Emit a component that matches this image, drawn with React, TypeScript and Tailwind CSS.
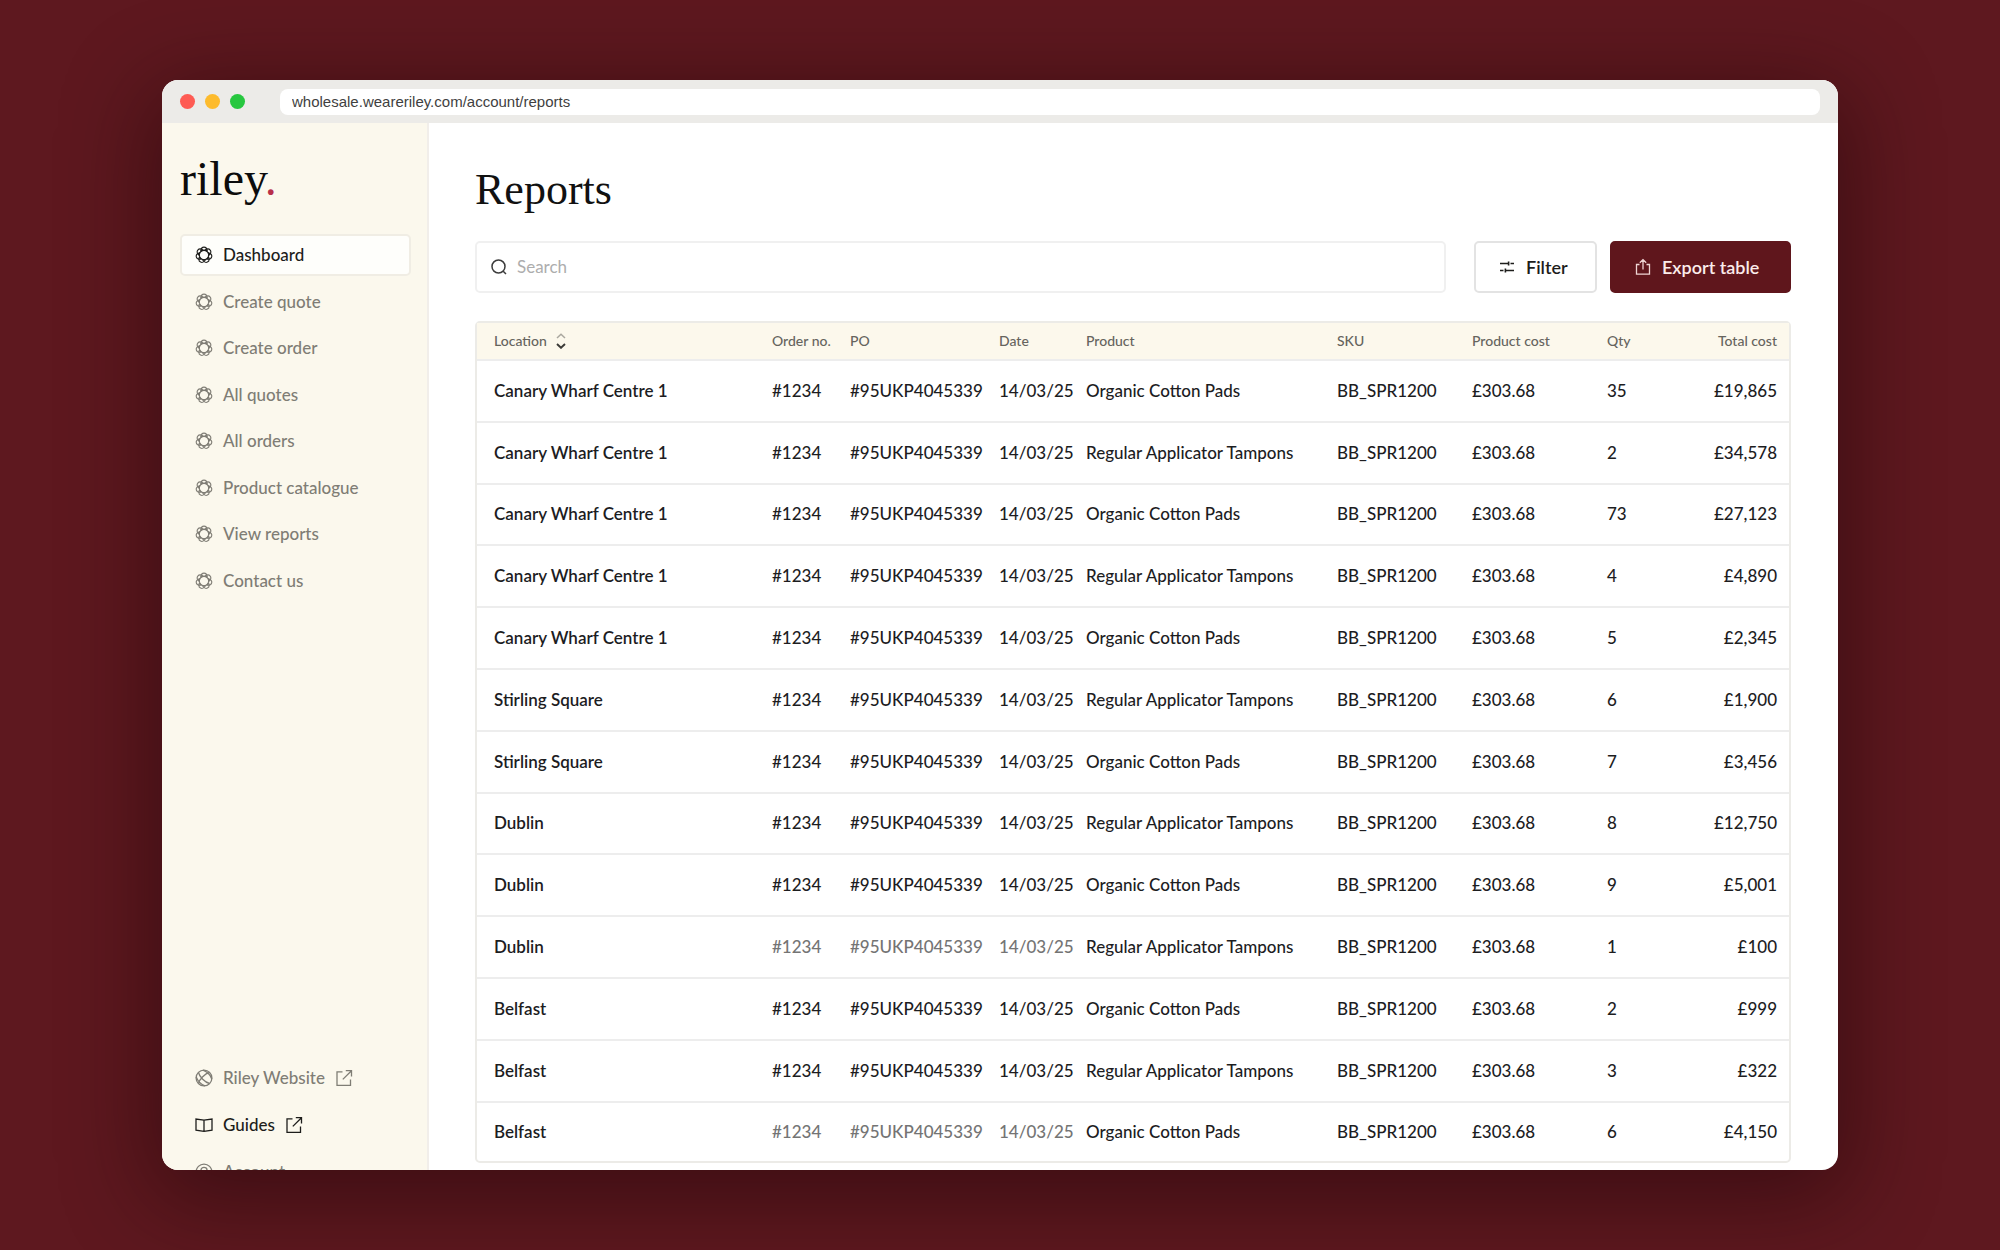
import React from "react";

type IconProps = { className?: string };

const stroke = {
  viewBox: "0 0 18 18",
  fill: "none",
  stroke: "currentColor",
  strokeWidth: 1.3,
  "aria-hidden": true,
} as const;

const petalAngles = [0, 1, 2, 3, 4, 5, 6].map((n) => (n * 360) / 7);

function FlowerIcon({ className = "" }: IconProps) {
  return (
    <svg {...stroke} className={"size-[18px] shrink-0 " + className}>
      {petalAngles.map((angle) => (
        <path
          key={angle}
          transform={`rotate(${angle} 9 9)`}
          d="M5.700 5.100C6 2.400 7.400 1.100 9 1.100s3 1.300 3.300 4C10.300 4.200 7.700 4.200 5.700 5.100Z"
          strokeWidth="1.1"
        />
      ))}
    </svg>
  );
}

function GlobeIcon({ className = "" }: IconProps) {
  return (
    <svg {...stroke} className={"size-[18px] shrink-0 " + className}>
      <circle cx="9" cy="9" r="7.900" />
      <path d="M3.500 3.500C4.500 8 10 13.500 14.500 14.500M14.500 3.500C10 4.500 4.500 10 3.500 14.500M8 1.200C12.500 3 15.500 6 16.800 10M1.200 8C3 12.500 6 15.500 10 16.800" />
    </svg>
  );
}

function BookIcon({ className = "" }: IconProps) {
  return (
    <svg {...stroke} className={"size-[18px] shrink-0 " + className}>
      <path d="M9 4.200 1 3v11.200l8 1.200 8-1.200V3L9 4.200ZM9 4.200v11.200" />
    </svg>
  );
}

function AccountIcon({ className = "" }: IconProps) {
  return (
    <svg {...stroke} className={"size-[18px] shrink-0 " + className}>
      <circle cx="9" cy="9" r="7.900" />
      <circle cx="9" cy="7.500" r="3.100" />
      <path d="M3.800 15c1-2.500 2.800-3.500 5.200-3.500s4.200 1 5.200 3.500" />
    </svg>
  );
}

function ExternalIcon({ className = "" }: IconProps) {
  return (
    <svg {...stroke} className={"size-[18px] shrink-0 " + className}>
      <path d="M7.500 2.800H2v13.500h13.500V10.500M10.800 1.700H16.500V7.400M16.500 1.700 7.800 10.400" />
    </svg>
  );
}

function SearchIcon() {
  return (
    <svg {...stroke} strokeWidth={1.5} className="size-[18px] shrink-0 text-[#3c3c3c]">
      <circle cx="8.500" cy="8.500" r="6.500" />
      <path d="m13.200 13.200 2.800 2.800" />
    </svg>
  );
}

function FilterIcon() {
  return (
    <svg {...stroke} className="size-[18px] shrink-0">
      <path d="M2 5.500h8M12.500 5.500H16M2 12.500h3.500M8 12.500h8" strokeWidth="1.500" />
      <path d="M10.600 3.400v4.200M7.400 10.400v4.200" strokeWidth="1.600" />
    </svg>
  );
}

function ExportIcon() {
  return (
    <svg {...stroke} className="size-[18px] shrink-0 text-[#efd5d4]">
      <path d="M5.500 6.500H2.500v9.700h13V6.500h-3M9 11.500V1.800M5.800 4.800 9 1.600l3.200 3.200" />
    </svg>
  );
}

function SortIcon() {
  return (
    <svg viewBox="0 0 10 16" fill="none" strokeWidth="1.500" aria-hidden className="h-4 w-[10px]">
      <path d="m1 5 4-3.800L9 5" stroke="#aaa79f" />
      <path d="m1 11 4 3.800L9 11" stroke="#3b3a37" strokeWidth="1.900" />
    </svg>
  );
}

const navItems = [
  "Dashboard",
  "Create quote",
  "Create order",
  "All quotes",
  "All orders",
  "Product catalogue",
  "View reports",
  "Contact us",
];

const footerItems = [
  { label: "Riley Website", Icon: GlobeIcon, external: true, active: false },
  { label: "Guides", Icon: BookIcon, external: true, active: true },
  { label: "Account", Icon: AccountIcon, external: false, active: false },
];

const rows = [
  { location: "Canary Wharf Centre 1", qty: 35, total: "£19,865" },
  { location: "Canary Wharf Centre 1", qty: 2, total: "£34,578" },
  { location: "Canary Wharf Centre 1", qty: 73, total: "£27,123" },
  { location: "Canary Wharf Centre 1", qty: 4, total: "£4,890" },
  { location: "Canary Wharf Centre 1", qty: 5, total: "£2,345" },
  { location: "Stirling Square", qty: 6, total: "£1,900" },
  { location: "Stirling Square", qty: 7, total: "£3,456" },
  { location: "Dublin", qty: 8, total: "£12,750" },
  { location: "Dublin", qty: 9, total: "£5,001" },
  { location: "Dublin", qty: 1, total: "£100", muted: true },
  { location: "Belfast", qty: 2, total: "£999" },
  { location: "Belfast", qty: 3, total: "£322" },
  { location: "Belfast", qty: 6, total: "£4,150", muted: true },
];

function BrowserBar() {
  return (
    <div className="flex h-[43px] shrink-0 items-center bg-[#ecebe8] px-[18px]">
      <div className="flex gap-[10px]">
        <span className="size-[15px] rounded-full bg-[#fe5b53]" />
        <span className="size-[15px] rounded-full bg-[#fdbb2d]" />
        <span className="size-[15px] rounded-full bg-[#27c73f]" />
      </div>
      <input
        aria-label="Address"
        defaultValue="wholesale.weareriley.com/account/reports"
        className="ml-[35px] h-[26px] min-w-0 flex-1 rounded-lg bg-white px-3 font-['Liberation_Sans',sans-serif] text-[15px] text-[#3f3f3f] outline-none"
      />
    </div>
  );
}

function Sidebar() {
  return (
    <aside className="flex w-[267px] shrink-0 flex-col border-r-2 border-[#f1eeea] bg-[#fbf8ed] pr-4 pl-[18px]">
      <a
        href="#home"
        className="mt-[26px] block font-['Liberation_Serif',serif] text-[48px] leading-[60px] text-[#0c0c0c]"
      >
        riley<span className="text-[#b8304a]">.</span>
      </a>
      <nav aria-label="Main" className="mt-[25px] flex h-[368px] flex-col justify-between">
        {navItems.map((label, i) => (
          <a
            key={label}
            href="#nav"
            aria-current={i === 0 ? "page" : undefined}
            className={
              "flex h-[42px] items-center gap-[10px] rounded-[5px] border-2 px-[13px] font-medium " +
              (i === 0
                ? "border-[#f0ede4] bg-[#fefefb] text-[#1d1d1b]"
                : "border-transparent text-[#7f7d75]")
            }
          >
            <FlowerIcon />
            {label}
          </a>
        ))}
      </nav>
      <div className="mt-auto -mb-[23px] flex flex-col gap-[5px]">
        {footerItems.map(({ label, Icon, external, active }) => (
          <a
            key={label}
            href="#link"
            className={
              "flex h-[42px] items-center gap-[10px] px-[15px] font-medium " +
              (active ? "text-[#1d1d1b]" : "text-[#7f7d75]")
            }
          >
            <Icon />
            {label}
            {external && <ExternalIcon />}
          </a>
        ))}
      </div>
    </aside>
  );
}

function Toolbar() {
  return (
    <div className="mt-[21px] flex h-[52px]">
      <label className="mr-7 flex min-w-0 flex-1 items-center gap-[9px] rounded-[5px] border-2 border-[#f0f0f0] px-[13px]">
        <SearchIcon />
        <input
          type="search"
          aria-label="Search"
          placeholder="Search"
          className="min-w-0 flex-1 bg-transparent outline-none placeholder:text-[#adadad]"
        />
      </label>
      <button
        type="button"
        className="mr-[13px] flex w-[123px] items-center gap-[10px] rounded-[5px] border-2 border-[#e3e3e3] pl-[22px] text-[18px] font-semibold text-[#1d1d1b]"
      >
        <FilterIcon />
        Filter
      </button>
      <button
        type="button"
        className="flex w-[181px] items-center gap-[10px] rounded-[5px] border-2 border-[#5f161c] bg-[#5f161c] pl-[22px] text-[18px] font-semibold text-[#fbeceb]"
      >
        <ExportIcon />
        Export table
      </button>
    </div>
  );
}

function ReportsTable() {
  return (
    <div className="mt-7 rounded-[5px] border-2 border-[#ecebe7]">
      <table className="h-[838px] w-full table-fixed text-left">
        <colgroup>
          <col />
          <col className="w-[78px]" />
          <col className="w-[149px]" />
          <col className="w-[87px]" />
          <col className="w-[251px]" />
          <col className="w-[135px]" />
          <col className="w-[135px]" />
          <col className="w-[70px]" />
          <col className="w-[112px]" />
        </colgroup>
        <thead>
          <tr className="h-[37px] bg-[#fcf8ec] text-[14px] leading-5 whitespace-nowrap text-[#66645e] *:font-medium">
            <th scope="col" className="pl-[17px]">
              <button type="button" className="flex items-center gap-[9px]">
                Location
                <SortIcon />
              </button>
            </th>
            <th scope="col">Order no.</th>
            <th scope="col">PO</th>
            <th scope="col">Date</th>
            <th scope="col">Product</th>
            <th scope="col">SKU</th>
            <th scope="col">Product cost</th>
            <th scope="col">Qty</th>
            <th scope="col" className="pr-3 text-right">
              Total cost
            </th>
          </tr>
        </thead>
        <tbody>
          {rows.map((row, i) => {
            const tone = row.muted ? "text-[#747474]" : "";
            return (
              <tr
                key={i}
                className="border-t-2 border-[#ededed] font-medium whitespace-nowrap text-[#1d1d1f]"
              >
                <td className="pl-[17px] font-semibold">{row.location}</td>
                <td className={tone}>#1234</td>
                <td className={tone}>#95UKP4045339</td>
                <td className={tone}>14/03/25</td>
                <td>{i % 2 ? "Regular Applicator Tampons" : "Organic Cotton Pads"}</td>
                <td>BB_SPR1200</td>
                <td>£303.68</td>
                <td>{row.qty}</td>
                <td className="pr-3 text-right">{row.total}</td>
              </tr>
            );
          })}
        </tbody>
      </table>
    </div>
  );
}

export default function App() {
  return (
    <div className="flex min-h-screen flex-col bg-[#5e181f] px-[8.1%] py-20 font-['Lato',sans-serif] text-[17px] leading-6">
      <div className="flex flex-1 flex-col overflow-hidden rounded-2xl bg-white shadow-[0_20px_90px_10px_rgba(20,0,5,0.45)]">
        <BrowserBar />
        <div className="flex flex-1">
          <Sidebar />
          <main className="min-w-0 flex-1 pt-[37px] pr-[47px] pb-[7px] pl-[46px]">
            <h1 className="font-['Liberation_Serif',serif] text-[44px] leading-[60px] text-[#111]">
              Reports
            </h1>
            <Toolbar />
            <ReportsTable />
          </main>
        </div>
      </div>
    </div>
  );
}
